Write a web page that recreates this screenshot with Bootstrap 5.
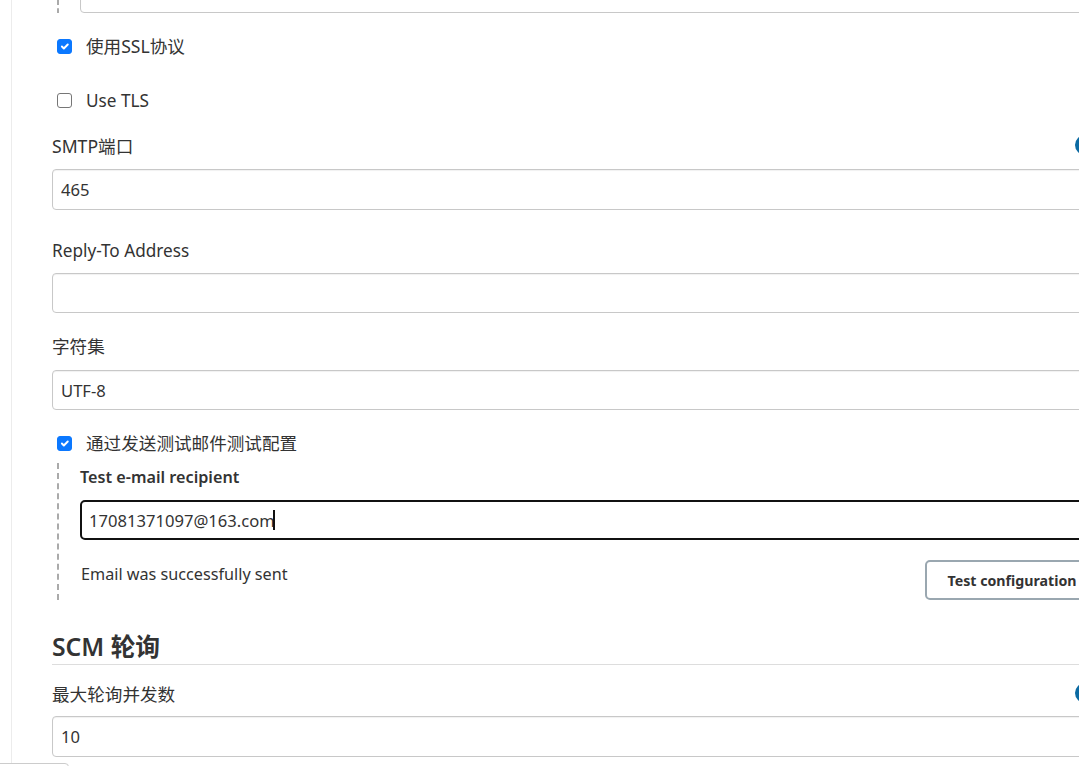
<!DOCTYPE html>
<html lang="en">
<head>
    <meta charset="UTF-8">
    <meta name="viewport" content="width=device-width, initial-scale=1.0">
    <title>Jenkins configuration</title>
    <link href="https://cdn.jsdelivr.net/npm/bootstrap@5.3.0/dist/css/bootstrap.min.css" rel="stylesheet">
    <style>
        html, body {
            height: 766px;
            overflow: hidden;
        }
        body {
            background: #fff;
            color: #333;
            font-family: "Noto Sans", "Noto Sans CJK SC", sans-serif;
            font-size: 16.6px;
            position: relative;
        }
        .page-rail {
            border-left: 1px solid #ececec;
            height: 766px;
            margin-left: 11px;
            padding-left: 40px;
            width: 1400px;
        }
        .cjk-text { font-size: 17.6px; }
        .wide-text { font-size: 17.2px; }
        .thin-text { font-size: 16.2px; }
        .nudge-text { padding-top: 2px; }
        .field-label {
            line-height: 24px;
            margin: 0;
        }
        .field-input.form-control {
            border: 1px solid #c8c8c8;
            border-radius: 4px;
            box-shadow: inset 0 1px 1px rgba(0, 0, 0, .06);
            color: #333;
            flex: none;
            font-size: 16.6px;
            height: 40px;
            padding: 0 8px;
            width: 100%;
        }
        .field-input.tall-input { height: 41px; }
        .field-active.form-control {
            border: 2px solid #111;
            border-radius: 5px;
            box-shadow: none;
            padding: 0 7px;
        }
        .check-row {
            align-items: center;
            display: flex;
            height: 24px;
            margin-left: 5px;
        }
        .check-row .form-check-input {
            border: 1px solid #767676;
            border-radius: 3px;
            flex: none;
            height: 15px;
            margin: 0 14px 0 0;
            width: 15px;
        }
        .check-row .form-check-input:checked {
            background-color: #0b78ff;
            border-color: #0b78ff;
        }
        .help-dot {
            background: #0b6aa2;
            border-radius: 50%;
            flex: none;
            height: 20px;
            margin-left: auto;
            width: 20px;
        }
        .dot-up { margin-bottom: 2px; }
        .help-span {
            align-items: center;
            display: flex;
            width: 1043px;
        }
        .nest-block {
            border-left: 2px dashed #aaa;
            margin-left: 5px;
            padding-left: 21px;
        }
        .nest-top {
            align-items: flex-end;
            display: flex;
            height: 13px;
        }
        .nest-test {
            height: 137px;
            margin-top: 8px;
        }
        .recipient-label {
            font-weight: 600;
            padding-top: 2px;
        }
        .recipient-box {
            margin-top: 11px;
            position: relative;
        }
        .text-cursor {
            background: #111;
            height: 20px;
            left: 193px;
            position: absolute;
            top: 10px;
            width: 2px;
        }
        .result-row {
            display: flex;
            margin-top: 20px;
            width: 1019px;
        }
        .result-text {
            margin-left: 1px;
            margin-top: 2px;
        }
        .section-head {
            border-bottom: 1px solid #ddd;
            font-size: 24.7px;
            font-weight: 600;
            height: 39px;
            line-height: 42px;
            margin: 26px 0 0;
        }
        .test-btn {
            background: #fff;
            border: 2px solid #9aa7b0;
            border-radius: 5px;
            color: #333;
            font-size: 14.2px;
            font-weight: 700;
            height: 40px;
            margin-left: auto;
            padding: 2px 0 0;
            white-space: nowrap;
            width: 174px;
        }
        .status-tab {
            background: #fff;
            border: 1px solid #ccc;
            border-radius: 0 4px 0 0;
            bottom: -10px;
            height: 13px;
            left: -1px;
            position: absolute;
            width: 70px;
        }
        .gap-ssl { height: 21px; }
        .gap-tls { height: 30px; }
        .head-smtp { height: 32px; margin-top: 17px; }
        .input-smtp { margin-top: 8px; }
        .head-reply { margin-top: 29px; }
        .input-reply { margin-top: 10px; }
        .head-charset { margin-top: 21px; }
        .input-charset { margin-top: 12px; }
        .check-test { margin-top: 21px; }
        .head-poll { height: 24px; margin-top: 17px; }
        .input-poll { margin-top: 10px; }
    </style>
</head>
<body>
    <div class="page-rail">
        <div class="nest-block nest-top">
            <input type="text" class="form-control field-input">
        </div>
        <div class="gap-ssl"></div>

        <div class="check-row help-span">
            <input class="form-check-input" type="checkbox" checked>
            <span class="cjk-text">使用SSL协议</span>
            <span class="help-dot dot-up"></span>
        </div>
        <div class="gap-tls"></div>
        <div class="check-row">
            <input class="form-check-input" type="checkbox">
            <span class="wide-text nudge-text">Use TLS</span>
        </div>

        <div class="help-span head-smtp">
            <span class="field-label cjk-text nudge-text">SMTP端口</span>
            <span class="help-dot"></span>
        </div>
        <input type="text" class="form-control field-input tall-input input-smtp" value="465">

        <p class="field-label wide-text head-reply">Reply-To Address</p>
        <input type="text" class="form-control field-input input-reply">

        <p class="field-label cjk-text head-charset">字符集</p>
        <input type="text" class="form-control field-input input-charset" value="UTF-8">

        <div class="check-row check-test">
            <input class="form-check-input" type="checkbox" checked>
            <span class="cjk-text">通过发送测试邮件测试配置</span>
        </div>
        <div class="nest-block nest-test">
            <p class="field-label recipient-label thin-text">Test e-mail recipient</p>
            <div class="recipient-box">
                <input type="text" class="form-control field-input field-active" value="17081371097@163.com">
                <span class="text-cursor"></span>
            </div>
            <div class="result-row">
                <span class="result-text thin-text">Email was successfully sent</span>
                <button type="button" class="test-btn">Test configuration</button>
            </div>
        </div>

        <h3 class="section-head">SCM 轮询</h3>
        <div class="help-span head-poll">
            <span class="field-label cjk-text">最大轮询并发数</span>
            <span class="help-dot dot-up"></span>
        </div>
        <input type="text" class="form-control field-input tall-input input-poll" value="10">
    </div>
    <div class="status-tab"></div>

    <script src="https://cdn.jsdelivr.net/npm/bootstrap@5.3.0/dist/js/bootstrap.bundle.min.js"></script>
</body>
</html>
